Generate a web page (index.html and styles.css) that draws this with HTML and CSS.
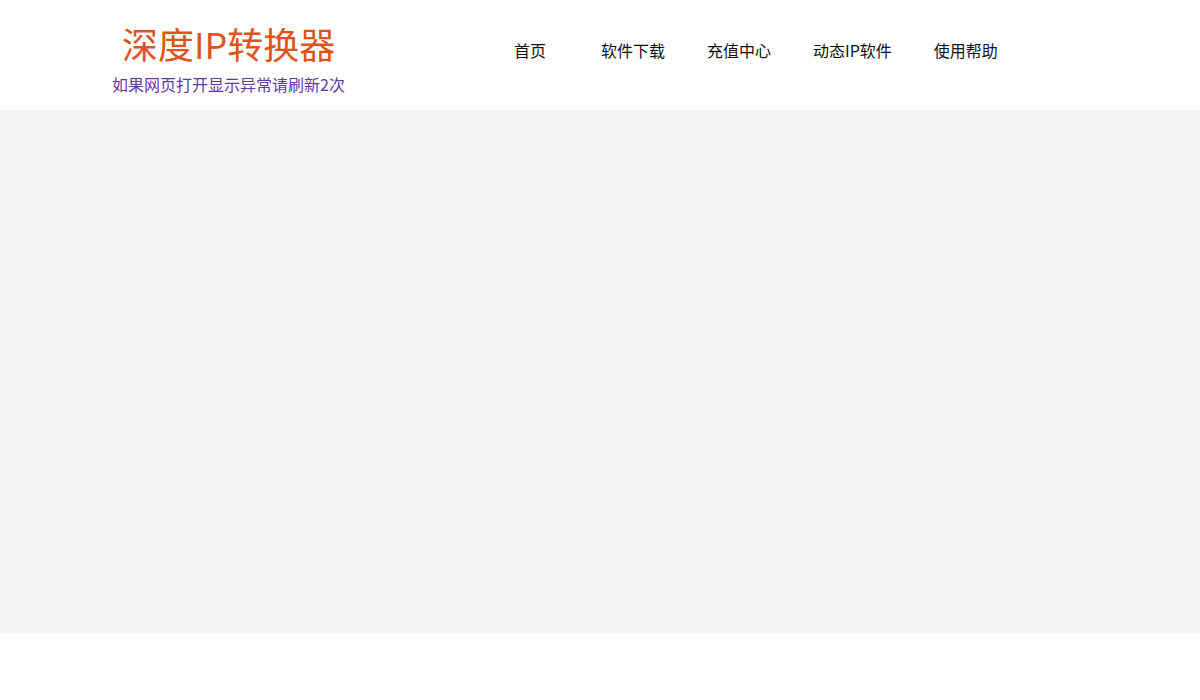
FILE: index.html
```html
<!DOCTYPE html>
<html lang="zh-CN">
<head>
<meta charset="utf-8">
<title>深度IP转换器</title>
<link rel="stylesheet" href="styles.css">
</head>
<body>
<header class="header">
  <div class="brand">
    <div class="logo">深度IP转换器</div>
    <div class="tip">如果网页打开显示异常请刷新2次</div>
  </div>
  <nav class="nav">
    <a class="nav-item first" href="#">首页</a>
    <a class="nav-item" href="#">软件下载</a>
    <a class="nav-item" href="#">充值中心</a>
    <a class="nav-item" href="#">动态IP软件</a>
    <a class="nav-item" href="#">使用帮助</a>
  </nav>
</header>
<main class="banner"></main>
</body>
</html>
```
FILE: styles.css
```css
html, body {
  margin: 0;
  padding: 0;
  background: #ffffff;
  font-family: "Noto Sans CJK SC", "Noto Sans", sans-serif;
}
.header {
  height: 110px;
  display: flex;
  align-items: flex-start;
  padding-left: 112px;
  box-sizing: border-box;
}
.brand {
  display: flex;
  flex-direction: column;
  align-items: flex-start;
  padding-top: 18px;
}
.logo {
  font-size: 36px;
  line-height: 50px;
  color: #e0521e;
  padding-left: 10px;
}
.tip {
  font-size: 16px;
  line-height: 24px;
  color: #6437a2;
  margin-top: 4px;
}
.nav {
  display: flex;
  gap: 42px;
  margin-left: 169px;
  padding-top: 38px;
}
.nav-item {
  font-size: 16px;
  line-height: 24px;
  color: #111111;
  text-decoration: none;
}
.nav-item.first {
  margin-right: 13px;
}
.banner {
  display: block;
  height: 523px;
  background: #f3f3f3;
}
```
